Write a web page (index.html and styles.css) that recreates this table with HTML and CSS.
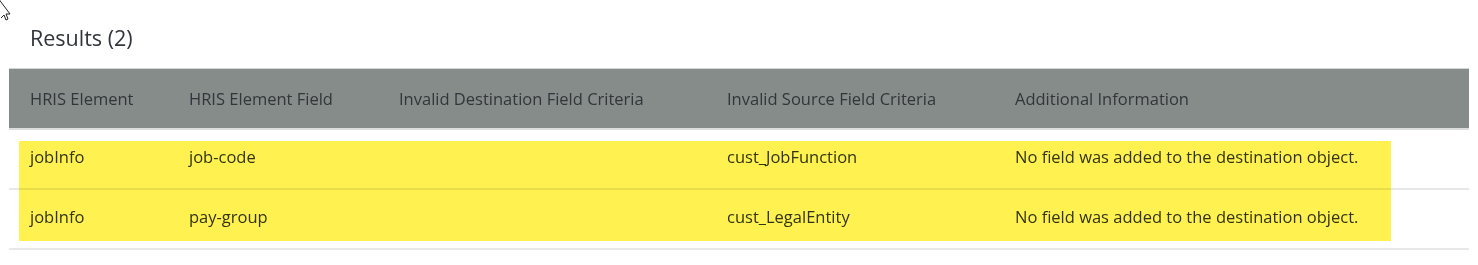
FILE: index.html
```html
<!DOCTYPE html>
<html>
<head>
<meta charset="utf-8">
<link rel="stylesheet" href="styles.css">
</head>
<body>
<svg class="cursor" width="12" height="26" viewBox="0 0 12 26">
  <path d="M-2 -2 L10 14 L6 14 L8 19 L6 20 L4 15 L1 18" fill="#fff" stroke="#222" stroke-width="1"/>
</svg>
<div class="page">
  <h2 class="title">Results (2)</h2>
  <div class="table">
    <div class="row head">
      <div class="c c1">HRIS Element</div>
      <div class="c c2">HRIS Element Field</div>
      <div class="c c3">Invalid Destination Field Criteria</div>
      <div class="c c4">Invalid Source Field Criteria</div>
      <div class="c c5">Additional Information</div>
    </div>
    <div class="body">
      <div class="row data">
        <div class="c c1">jobInfo</div>
        <div class="c c2">job-code</div>
        <div class="c c3"></div>
        <div class="c c4">cust_JobFunction</div>
        <div class="c c5">No field was added to the destination object.</div>
      </div>
      <div class="row data">
        <div class="c c1">jobInfo</div>
        <div class="c c2">pay-group</div>
        <div class="c c3"></div>
        <div class="c c4">cust_LegalEntity</div>
        <div class="c c5">No field was added to the destination object.</div>
      </div>
      <div class="highlight"></div>
    </div>
  </div>
</div>
</body>
</html>
```

FILE: styles.css
```css
html, body {
  margin: 0;
  padding: 0;
  background: #fff;
}
body {
  font-family: "Open Sans", "Liberation Sans", sans-serif;
  color: #32363a;
  width: 1478px;
  height: 265px;
  overflow: hidden;
  position: relative;
}
.cursor {
  position: absolute;
  left: 0;
  top: 0;
}
.page {
  padding: 0 9px;
}
.title {
  margin: 0;
  padding: 24px 0 0 21px;
  height: 68px;
  box-sizing: border-box;
  font-weight: normal;
  font-size: 21.5px;
  line-height: 28px;
  color: #32363a;
}
.table {
  width: 1460px;
}
.row {
  display: flex;
  align-items: center;
  font-size: 16.5px;
}
.head {
  height: 62px;
  box-sizing: border-box;
  background: #858c8a;
  border-top: 1px solid #d4d6d6;
  border-bottom: 2px solid #dcdede;
  color: #32363a;
}
.data {
  height: 60px;
  box-sizing: border-box;
  border-bottom: 2px solid #e8e8e8;
  padding-bottom: 6px;
}
.c1 { width: 180px; padding-left: 21px; box-sizing: border-box; }
.c2 { width: 210px; }
.c3 { width: 328px; }
.c4 { width: 288px; }
.c5 { flex: 1; }
.body {
  position: relative;
}
.highlight {
  position: absolute;
  left: 10px;
  top: 11px;
  width: 1372px;
  height: 100px;
  background: #fff250;
  mix-blend-mode: multiply;
  pointer-events: none;
}
```
